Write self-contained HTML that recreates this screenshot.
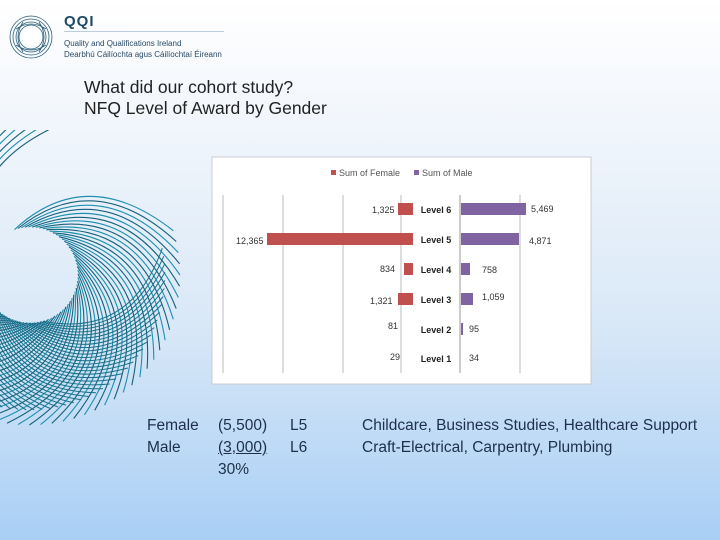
<!DOCTYPE html>
<html><head><meta charset="utf-8"><style>
*{margin:0;padding:0}
body{width:720px;height:540px;overflow:hidden;position:relative;font-family:"Liberation Sans",sans-serif;background:linear-gradient(180deg,#ffffff 0%,#f3f7fc 20%,#d9e8f7 60%,#a9cff5 100%)}
.abs{position:absolute}
.t{color:#222;font-size:17.5px;line-height:21px}
.b{color:#1d2f4a;font-size:15.5px;line-height:22px;white-space:nowrap}
</style></head><body>
<svg class="abs" style="left:8px;top:14px" width="46" height="46" viewBox="0 0 46 46">
<g fill="none" stroke="#2a5f7a" stroke-width="0.8">
<circle cx="23" cy="23" r="21"/><circle cx="23" cy="23" r="18"/><circle cx="23" cy="23" r="15"/><circle cx="23" cy="23" r="12"/>
<path d="M8 15 Q23 5 38 15 M8 31 Q23 41 38 31 M15 8 Q5 23 15 38 M31 8 Q41 23 31 38"/>
</g><rect x="16" y="16" width="14" height="14" fill="#fff" transform="rotate(45 23 23)"/></svg>
<div class="abs" style="left:64px;top:13px;font-weight:bold;font-size:15px;color:#1e4a66;letter-spacing:1px">QQI</div>
<div class="abs" style="left:64px;top:31px;width:160px;height:1px;background:#bcd"></div>
<div class="abs" style="left:64px;top:38px;font-size:8px;line-height:11px;color:#2a4a66">Quality and Qualifications Ireland<br>Dearbhú Cáilíochta agus Cáilíochtaí Éireann</div>
<div class="abs t" style="left:84px;top:77px">What did our cohort study?<br>NFQ Level of Award by Gender</div>
<svg id="sp" class="abs" style="left:0;top:130px" width="200" height="310"></svg>
<svg class="abs" style="left:211px;top:156px" width="382" height="230" viewBox="211 156 382 230" font-family="Liberation Sans,sans-serif">
<rect x="212" y="157" width="379" height="227" fill="#fff" stroke="#c8ccd0"/>
<rect x="331" y="170" width="5" height="5" fill="#c0504d"/><text x="339" y="176" font-size="9" fill="#555">Sum of Female</text>
<rect x="414" y="170" width="5" height="5" fill="#8064a2"/><text x="422" y="176" font-size="9" fill="#555">Sum of Male</text>
<g stroke="#bbb" stroke-width="1"><line x1="223" y1="195" x2="223" y2="373"/><line x1="283" y1="195" x2="283" y2="373"/><line x1="343" y1="195" x2="343" y2="373"/><line x1="401" y1="195" x2="401" y2="373"/><line x1="520" y1="195" x2="520" y2="373"/><line x1="460" y1="195" x2="460" y2="373" stroke="#999"/></g>
<g fill="#c0504d"><rect x="398" y="203" width="15" height="12"/><rect x="267" y="233" width="146" height="12"/><rect x="404" y="263" width="9" height="12"/><rect x="398" y="293" width="15" height="12"/></g>
<g fill="#8064a2"><rect x="461" y="203" width="65" height="12"/><rect x="461" y="233" width="58" height="12"/><rect x="461" y="263" width="9" height="12"/><rect x="461" y="293" width="12" height="12"/><rect x="461" y="323" width="2" height="12"/></g>
<g font-size="9" font-weight="bold" fill="#222" text-anchor="middle"><text x="436" y="213">Level 6</text><text x="436" y="243">Level 5</text><text x="436" y="273">Level 4</text><text x="436" y="303">Level 3</text><text x="436" y="333">Level 2</text><text x="436" y="362">Level 1</text></g>
<g font-size="9" fill="#333"><text x="372" y="213">1,325</text><text x="236" y="244">12,365</text><text x="380" y="272">834</text><text x="370" y="304">1,321</text><text x="388" y="329">81</text><text x="390" y="360">29</text>
<text x="531" y="212">5,469</text><text x="529" y="244">4,871</text><text x="482" y="273">758</text><text x="482" y="300">1,059</text><text x="469" y="332">95</text><text x="469" y="361">34</text></g>
</svg>
<div class="abs b" style="left:147px;top:415px">Female<br>Male</div>
<div class="abs b" style="left:218px;top:415px">(5,500)<br><span style="text-decoration:underline">(3,000)</span><br>30%</div>
<div class="abs b" style="left:290px;top:415px">L5<br>L6</div>
<div class="abs b" style="left:362px;top:415px">Childcare, Business Studies, Healthcare Support<br>Craft-Electrical, Carpentry, Plumbing</div>
<script>
(function(){var s=document.getElementById('sp'),h='',cx=30,cy=145,r=48;
for(var i=0;i<70;i++){var t=-1.9+i*0.075;var x0=cx+r*Math.cos(t),y0=cy+r*Math.sin(t);
var tx=-Math.sin(t),ty=Math.cos(t);var qx=x0+tx*90+Math.cos(t)*40,qy=y0+ty*90+Math.sin(t)*40;
var a=t+1.6;var x1=cx+150*Math.cos(a),y1=cy+150*Math.sin(a);
h+='<path d="M'+x0.toFixed(1)+' '+y0.toFixed(1)+'Q'+qx.toFixed(1)+' '+qy.toFixed(1)+' '+x1.toFixed(1)+' '+y1.toFixed(1)+'" stroke="'+(i%2?'#17607a':'#1f8fae')+'" stroke-width="1.1" fill="none"/>';}
for(var i=0;i<40;i++){var t=1.3+i*0.06;var x0=cx+r*Math.cos(t),y0=cy+r*Math.sin(t);
var tx=Math.sin(t),ty=-Math.cos(t);var qx=x0+tx*80+Math.cos(t)*40,qy=y0+ty*80+Math.sin(t)*40;var a=t-1.5;
var x1=cx+135*Math.cos(a),y1=cy+135*Math.sin(a);
h+='<path d="M'+x0.toFixed(1)+' '+y0.toFixed(1)+'Q'+qx.toFixed(1)+' '+qy.toFixed(1)+' '+x1.toFixed(1)+' '+y1.toFixed(1)+'" stroke="#1a6f8a" stroke-width="1" fill="none"/>';}
s.innerHTML=h;})();
</script>
</body></html>
